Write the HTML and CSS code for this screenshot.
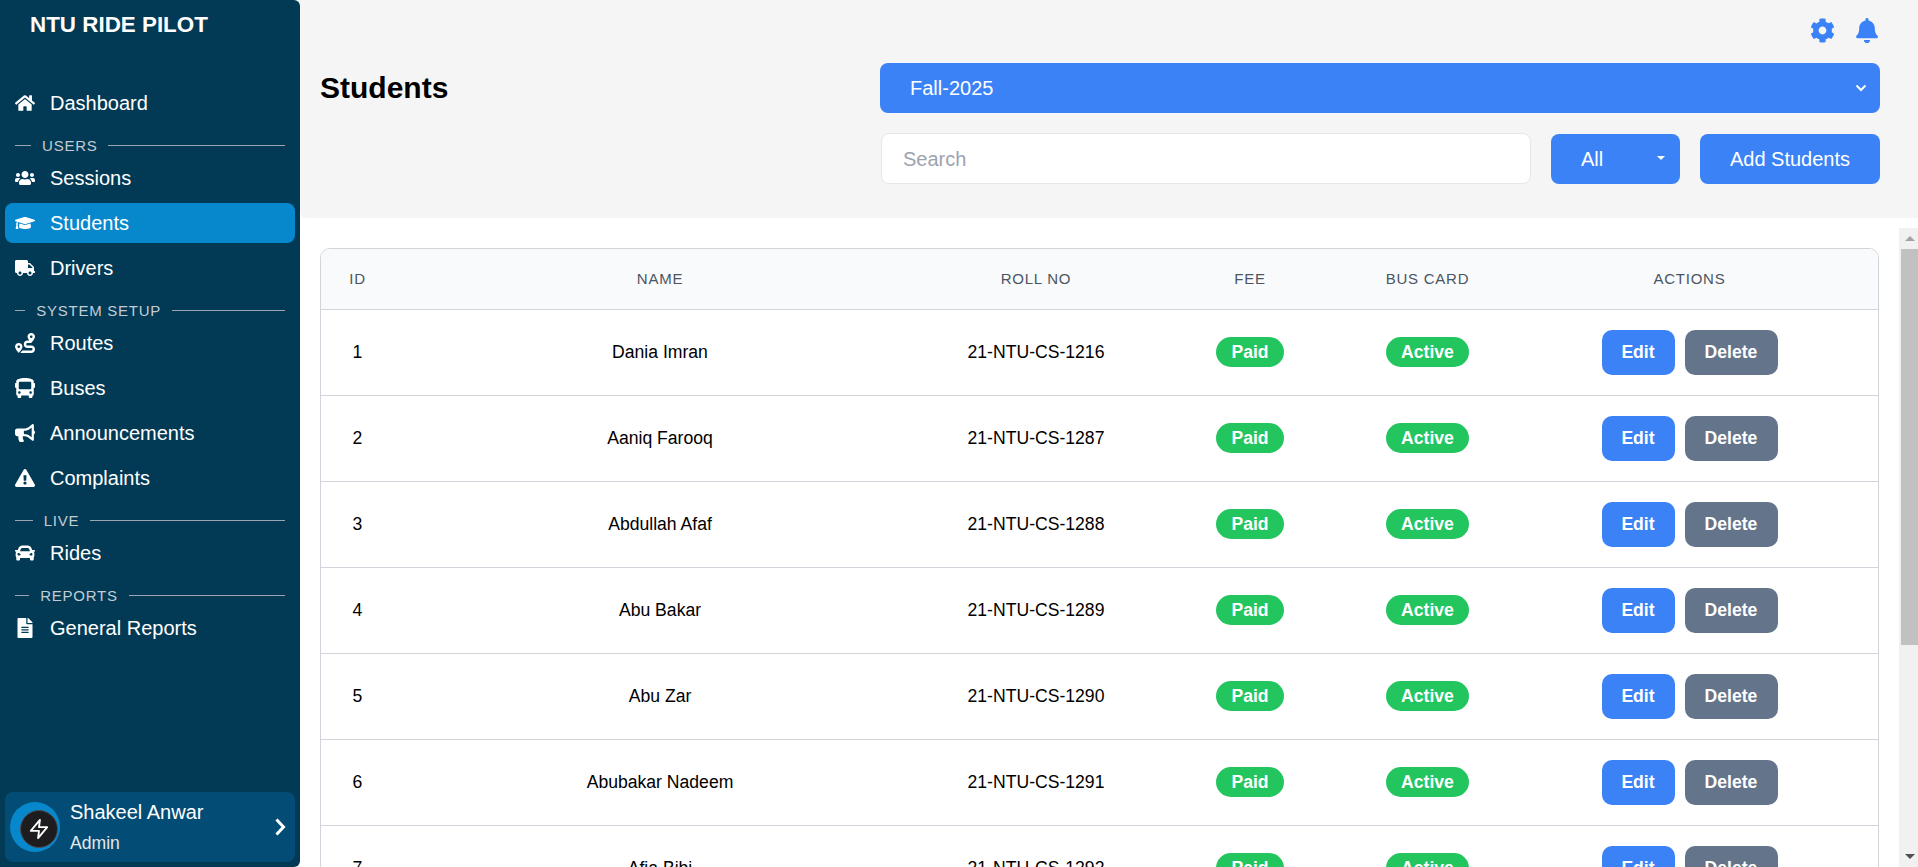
FILE: index.html
```html
<!DOCTYPE html>
<html lang="en">
<head>
    <meta charset="UTF-8">
    <meta name="viewport" content="width=device-width, initial-scale=1.0">
    <title>Students - NTU Ride Pilot</title>
    <link rel="stylesheet" href="styles.css">
</head>
<body>
    <div class="layout">
        <aside class="sidebar">
            <div class="brand">NTU RIDE PILOT</div>

            <nav class="nav">
                <a class="nav-item" href="#">
                    <svg class="nav-icon" viewBox="0 0 576 512"><path d="M280.37 148.26L96 300.11V464a16 16 0 0 0 16 16l112.06-.29a16 16 0 0 0 15.92-16V368a16 16 0 0 1 16-16h64a16 16 0 0 1 16 16v95.64a16 16 0 0 0 16 16.05L464 480a16 16 0 0 0 16-16V300L295.67 148.26a12.19 12.19 0 0 0-15.3 0zM571.6 251.47L488 182.56V44.05a12 12 0 0 0-12-12h-56a12 12 0 0 0-12 12v72.61L318.47 43a48 48 0 0 0-61 0L4.34 251.47a12 12 0 0 0-1.6 16.9l25.5 31A12 12 0 0 0 45.15 301l235.22-193.74a12.19 12.19 0 0 1 15.3 0L530.9 301a12 12 0 0 0 16.9-1.6l25.5-31a12 12 0 0 0-1.7-16.93z"/></svg>
                    Dashboard
                </a>

                <div class="nav-label"><span>USERS</span></div>
                <a class="nav-item" href="#">
                    <svg class="nav-icon" viewBox="0 0 640 512"><path d="M96 224c35.3 0 64-28.7 64-64s-28.7-64-64-64-64 28.7-64 64 28.7 64 64 64zm448 0c35.3 0 64-28.7 64-64s-28.7-64-64-64-64 28.7-64 64 28.7 64 64 64zm32 32h-64c-17.6 0-33.5 7.1-45.1 18.6 40.3 22.1 68.9 62 75.1 109.4h66c17.7 0 32-14.3 32-32v-32c0-35.3-28.7-64-64-64zm-256 0c61.9 0 112-50.1 112-112S381.9 32 320 32 208 82.1 208 144s50.1 112 112 112zm76.8 32h-8.3c-20.8 10-43.9 16-68.5 16s-47.6-6-68.5-16h-8.3C179.6 288 128 339.6 128 403.2V432c0 26.5 21.5 48 48 48h288c26.5 0 48-21.5 48-48v-28.8c0-63.6-51.6-115.2-115.2-115.2zm-223.7-13.4C161.5 263.1 145.6 256 128 256H64c-35.3 0-64 28.7-64 64v32c0 17.7 14.3 32 32 32h65.9c6.3-47.4 34.9-87.3 75.2-109.4z"/></svg>
                    Sessions
                </a>
                <a class="nav-item active" href="#">
                    <svg class="nav-icon" viewBox="0 0 640 512"><path d="M622.34 153.2L343.4 67.5c-15.2-4.67-31.6-4.67-46.79 0L17.66 153.2c-23.54 7.23-23.54 38.36 0 45.59l48.63 14.94c-10.67 13.19-17.23 29.28-17.88 46.9C38.78 266.15 32 276.11 32 288c0 10.78 5.68 19.85 13.86 25.65L20.33 428.53C18.11 438.52 25.71 448 35.94 448h56.11c10.24 0 17.84-9.48 15.62-19.47L82.14 313.65C90.32 307.85 96 298.78 96 288c0-11.57-6.47-21.25-15.66-26.87.76-15.02 8.44-28.3 20.69-36.72L296.6 284.5c9.06 2.78 26.44 6.25 46.79 0l278.95-85.7c23.55-7.24 23.55-38.36 0-45.6zM352.79 315.09c-28.53 8.76-52.84 3.92-65.59 0l-145.02-44.55L128 384c0 35.35 85.96 64 192 64s192-28.65 192-64l-14.18-113.47-145.03 44.56z"/></svg>
                    Students
                </a>
                <a class="nav-item" href="#">
                    <svg class="nav-icon" viewBox="0 0 640 512"><path d="M624 352h-16V243.9c0-12.7-5.1-24.9-14.1-33.9L494 110.1c-9-9-21.2-14.1-33.9-14.1H416V48c0-26.5-21.5-48-48-48H48C21.5 0 0 21.5 0 48v320c0 26.5 21.5 48 48 48h16c0 53 43 96 96 96s96-43 96-96h128c0 53 43 96 96 96s96-43 96-96h48c8.8 0 16-7.2 16-16v-32c0-8.8-7.2-16-16-16zM160 464c-26.5 0-48-21.5-48-48s21.5-48 48-48 48 21.5 48 48-21.5 48-48 48zm320 0c-26.5 0-48-21.5-48-48s21.5-48 48-48 48 21.5 48 48-21.5 48-48 48zm80-208H416V144h44.1l99.9 99.9V256z"/></svg>
                    Drivers
                </a>

                <div class="nav-label"><span>SYSTEM SETUP</span></div>
                <a class="nav-item" href="#">
                    <svg class="nav-icon" viewBox="0 0 512 512"><path d="M416 320h-96c-17.6 0-32-14.4-32-32s14.4-32 32-32h96s96-107 96-160-43-96-96-96-96 43-96 96c0 25.5 22.2 63.4 45.3 96H320c-52.9 0-96 43.1-96 96s43.1 96 96 96h96c17.6 0 32 14.4 32 32s-14.4 32-32 32H185.5c-16 24.8-33.8 47.7-47.3 64H416c52.9 0 96-43.1 96-96s-43.1-96-96-96zm0-256c17.7 0 32 14.3 32 32s-14.3 32-32 32-32-14.3-32-32 14.3-32 32-32zM96 256c-53 0-96 43-96 96s96 160 96 160 96-107 96-160-43-96-96-96zm0 128c-17.7 0-32-14.3-32-32s14.3-32 32-32 32 14.3 32 32-14.3 32-32 32z"/></svg>
                    Routes
                </a>
                <a class="nav-item" href="#">
                    <svg class="nav-icon" viewBox="0 0 512 512"><path d="M488 128h-8V80c0-44.8-99.2-80-224-80S32 35.2 32 80v48h-8c-13.25 0-24 10.74-24 24v80c0 13.25 10.75 24 24 24h8v160c0 17.67 14.33 32 32 32v32c0 17.67 14.33 32 32 32h32c17.67 0 32-14.33 32-32v-32h192v32c0 17.67 14.33 32 32 32h32c17.67 0 32-14.33 32-32v-32h6.4c16 0 25.6-12.8 25.6-25.6V256h8c13.25 0 24-10.75 24-24v-80c0-13.26-10.75-24-24-24zM112 400c-17.67 0-32-14.33-32-32s14.33-32 32-32 32 14.33 32 32-14.33 32-32 32zm16-112c-17.67 0-32-14.33-32-32V128c0-17.67 14.33-32 32-32h256c17.67 0 32 14.33 32 32v128c0 17.67-14.33 32-32 32H128zm272 112c-17.67 0-32-14.33-32-32s14.33-32 32-32 32 14.33 32 32-14.33 32-32 32z"/></svg>
                    Buses
                </a>
                <a class="nav-item" href="#">
                    <svg class="nav-icon" viewBox="0 0 576 512"><path d="M576 240c0-23.63-12.95-44.04-32-55.12V32.01C544 23.26 537.02 0 512 0c-7.12 0-14.19 2.38-19.98 7.02l-85.03 68.03C364.28 109.19 310.66 128 256 128H64c-35.35 0-64 28.65-64 64v96c0 35.35 28.65 64 64 64h33.7c-1.39 10.48-2.18 21.14-2.18 32 0 39.77 9.26 77.35 25.56 110.94 5.19 10.69 16.52 17.06 28.4 17.06h74.28c26.05 0 41.69-29.84 25.9-50.56-16.4-21.52-26.15-48.36-26.15-77.44 0-11.11 1.62-21.79 4.41-32H256c54.66 0 108.28 18.81 150.98 52.95l85.03 68.03a32.023 32.023 0 0 0 19.98 7.02c24.92 0 32-22.78 32-32V295.13C563.05 284.04 576 263.63 576 240zm-96 141.42l-33.05-26.44C392.95 311.78 325.12 288 256 288v-96c69.12 0 136.95-23.78 190.95-66.98L480 98.58v282.84z"/></svg>
                    Announcements
                </a>
                <a class="nav-item" href="#">
                    <svg class="nav-icon" viewBox="0 0 576 512"><path d="M569.517 440.013C587.975 472.007 564.806 512 527.94 512H48.054c-36.937 0-59.999-40.055-41.577-71.987L246.423 24.035c18.467-32.009 64.72-31.951 83.154 0l239.94 416.028zM288 354c-25.405 0-46 20.595-46 46s20.595 46 46 46 46-20.595 46-46-20.595-46-46-46zm-43.673-165.346l7.418 136c.347 6.364 5.609 11.346 11.982 11.346h48.546c6.373 0 11.635-4.982 11.982-11.346l7.418-136c.375-6.874-5.098-12.654-11.982-12.654h-63.383c-6.884 0-12.356 5.78-11.981 12.654z"/></svg>
                    Complaints
                </a>

                <div class="nav-label"><span>LIVE</span></div>
                <a class="nav-item" href="#">
                    <svg class="nav-icon" viewBox="0 0 512 512"><path d="M499.99 176h-59.87l-16.64-41.6C406.38 91.63 365.57 64 319.5 64h-127c-46.06 0-86.88 27.63-103.99 70.4L71.87 176H12.01C4.2 176-1.53 183.34.37 190.91l6 24C7.7 220.25 12.5 224 18.01 224h20.07C24.65 235.73 16 252.78 16 272v48c0 16.12 6.16 30.67 16 41.93V416c0 17.67 14.33 32 32 32h32c17.67 0 32-14.33 32-32v-32h256v32c0 17.67 14.33 32 32 32h32c17.67 0 32-14.33 32-32v-54.07c9.84-11.25 16-25.8 16-41.93v-48c0-19.22-8.65-36.27-22.07-48H494c5.51 0 10.31-3.75 11.64-9.09l6-24c1.89-7.57-3.84-14.91-11.65-14.91zm-352.06-17.83c7.29-18.22 24.94-30.17 44.57-30.17h127c19.63 0 37.28 11.95 44.57 30.17L384 208H128l19.93-49.83zM96 319.8c-19.2 0-32-12.76-32-31.9S76.8 256 96 256s48 28.71 48 47.85-28.8 15.95-48 15.95zm320 0c-19.2 0-48 3.19-48-15.95S396.8 256 416 256s32 12.76 32 31.9-12.8 31.9-32 31.9z"/></svg>
                    Rides
                </a>

                <div class="nav-label"><span>REPORTS</span></div>
                <a class="nav-item" href="#">
                    <svg class="nav-icon" viewBox="0 0 384 512"><path d="M224 136V0H24C10.7 0 0 10.7 0 24v464c0 13.3 10.7 24 24 24h336c13.3 0 24-10.7 24-24V160H248c-13.2 0-24-10.8-24-24zm64 236c0 6.6-5.4 12-12 12H108c-6.6 0-12-5.4-12-12v-8c0-6.6 5.4-12 12-12h168c6.6 0 12 5.4 12 12v8zm0-64c0 6.6-5.4 12-12 12H108c-6.6 0-12-5.4-12-12v-8c0-6.6 5.4-12 12-12h168c6.6 0 12 5.4 12 12v8zm0-72v8c0 6.6-5.4 12-12 12H108c-6.6 0-12-5.4-12-12v-8c0-6.6 5.4-12 12-12h168c6.6 0 12 5.4 12 12zm96-114.1v6.1H256V0h6.1c6.4 0 12.5 2.5 17 7l97.9 98c4.5 4.5 7 10.6 7 16.9z"/></svg>
                    General Reports
                </a>
            </nav>

            <div class="user-box">
                <div class="avatar">
                    <div class="avatar-inner">
                        <svg viewBox="0 0 24 24"><path d="M13 2 3 14h9l-1 8 10-12h-9l1-8z"/></svg>
                    </div>
                </div>
                <div class="user-info">
                    <div class="user-name">Shakeel Anwar</div>
                    <div class="user-role">Admin</div>
                </div>
                <svg class="user-arrow" viewBox="0 0 12 20"><path d="M2.5 2.5 9.5 10l-7 7.5"/></svg>
            </div>
        </aside>

        <main class="main">
            <header class="topbar">
                <div class="top-icons">
                    <svg class="top-icon" viewBox="0 0 512 512"><path d="M487.4 315.7l-42.6-24.6c4.3-23.2 4.3-47 0-70.2l42.6-24.6c4.9-2.8 7.1-8.6 5.5-14-11.1-35.6-30-67.8-54.7-94.6-3.8-4.1-10-5.1-14.8-2.3L380.8 110c-17.9-15.4-38.5-27.3-60.8-35.1V25.8c0-5.6-3.9-10.5-9.4-11.7-36.7-8.2-74.3-7.8-109.2 0-5.5 1.2-9.4 6.1-9.4 11.7V75c-22.2 7.9-42.8 19.8-60.8 35.1L88.7 85.5c-4.9-2.8-11-1.9-14.8 2.3-24.7 26.7-43.6 58.9-54.7 94.6-1.7 5.4.6 11.2 5.5 14L67.3 221c-4.3 23.2-4.3 47 0 70.2l-42.6 24.6c-4.9 2.8-7.1 8.6-5.5 14 11.1 35.6 30 67.8 54.7 94.6 3.8 4.1 10 5.1 14.8 2.3l42.6-24.6c17.9 15.4 38.5 27.3 60.8 35.1v49.2c0 5.6 3.9 10.5 9.4 11.7 36.7 8.2 74.3 7.8 109.2 0 5.5-1.2 9.4-6.1 9.4-11.7v-49.2c22.2-7.9 42.8-19.8 60.8-35.1l42.6 24.6c4.9 2.8 11 1.9 14.8-2.3 24.7-26.7 43.6-58.9 54.7-94.6 1.5-5.5-.7-11.3-5.6-14.1zM256 336c-44.1 0-80-35.9-80-80s35.9-80 80-80 80 35.9 80 80-35.9 80-80 80z"/></svg>
                    <svg class="top-icon bell" viewBox="0 0 448 512"><path d="M224 512c35.32 0 63.97-28.65 63.97-64H160.03c0 35.35 28.65 64 63.97 64zm215.39-149.71c-19.32-20.76-55.47-51.99-55.47-154.29 0-77.7-54.48-139.9-127.94-155.16V32c0-17.67-14.32-32-31.98-32s-31.98 14.33-31.98 32v20.84C118.56 68.1 64.08 130.3 64.08 208c0 102.3-36.15 133.53-55.47 154.29-6 6.45-8.66 14.16-8.61 21.71.11 16.4 12.98 32 32.1 32h383.8c19.12 0 32-15.6 32.1-32 .05-7.55-2.61-15.27-8.61-21.71z"/></svg>
                </div>

                <div class="title-row">
                    <h1>Students</h1>
                    <div class="controls">
                        <div class="select-wrap">
                            <select class="session-select">
                                <option>Fall-2025</option>
                            </select>
                            <svg class="select-chevron" viewBox="0 0 12 8"><path d="M1.5 1.5 6 6l4.5-4.5"/></svg>
                        </div>
                        <div class="filter-row">
                            <input class="search" type="text" placeholder="Search">
                            <div class="select-wrap filter-wrap">
                                <select class="filter-select">
                                    <option>All</option>
                                </select>
                                <span class="select-caret"></span>
                            </div>
                            <button class="add-btn">Add Students</button>
                        </div>
                    </div>
                </div>
            </header>

            <section class="content">
                <div class="table-area">
                    <div class="table-card">
                        <table>
                            <colgroup>
                                <col class="col-id">
                                <col class="col-name">
                                <col class="col-roll">
                                <col class="col-fee">
                                <col class="col-card">
                                <col>
                            </colgroup>
                            <thead>
                                <tr>
                                    <th>ID</th>
                                    <th>Name</th>
                                    <th>Roll No</th>
                                    <th>Fee</th>
                                    <th>Bus Card</th>
                                    <th>Actions</th>
                                </tr>
                            </thead>
                            <tbody>
                                <tr>
                                    <td>1</td><td>Dania Imran</td><td>21-NTU-CS-1216</td>
                                    <td><span class="badge">Paid</span></td><td><span class="badge">Active</span></td>
                                    <td><button class="btn edit">Edit</button><button class="btn delete">Delete</button></td>
                                </tr>
                                <tr>
                                    <td>2</td><td>Aaniq Farooq</td><td>21-NTU-CS-1287</td>
                                    <td><span class="badge">Paid</span></td><td><span class="badge">Active</span></td>
                                    <td><button class="btn edit">Edit</button><button class="btn delete">Delete</button></td>
                                </tr>
                                <tr>
                                    <td>3</td><td>Abdullah Afaf</td><td>21-NTU-CS-1288</td>
                                    <td><span class="badge">Paid</span></td><td><span class="badge">Active</span></td>
                                    <td><button class="btn edit">Edit</button><button class="btn delete">Delete</button></td>
                                </tr>
                                <tr>
                                    <td>4</td><td>Abu Bakar</td><td>21-NTU-CS-1289</td>
                                    <td><span class="badge">Paid</span></td><td><span class="badge">Active</span></td>
                                    <td><button class="btn edit">Edit</button><button class="btn delete">Delete</button></td>
                                </tr>
                                <tr>
                                    <td>5</td><td>Abu Zar</td><td>21-NTU-CS-1290</td>
                                    <td><span class="badge">Paid</span></td><td><span class="badge">Active</span></td>
                                    <td><button class="btn edit">Edit</button><button class="btn delete">Delete</button></td>
                                </tr>
                                <tr>
                                    <td>6</td><td>Abubakar Nadeem</td><td>21-NTU-CS-1291</td>
                                    <td><span class="badge">Paid</span></td><td><span class="badge">Active</span></td>
                                    <td><button class="btn edit">Edit</button><button class="btn delete">Delete</button></td>
                                </tr>
                                <tr>
                                    <td>7</td><td>Afia Bibi</td><td>21-NTU-CS-1292</td>
                                    <td><span class="badge">Paid</span></td><td><span class="badge">Active</span></td>
                                    <td><button class="btn edit">Edit</button><button class="btn delete">Delete</button></td>
                                </tr>
                            </tbody>
                        </table>
                    </div>
                </div>

                <div class="scrollbar">
                    <div class="scroll-btn"><span class="arrow-up"></span></div>
                    <div class="scroll-thumb"></div>
                    <div class="scroll-rest"></div>
                    <div class="scroll-btn"><span class="arrow-down"></span></div>
                </div>
            </section>
        </main>
    </div>
</body>
</html>
```

FILE: styles.css
```css
* {
    box-sizing: border-box;
}

html, body {
    margin: 0;
    height: 100%;
    overflow: hidden;
}

body {
    font-family: "Liberation Sans", Arial, sans-serif;
    background: white;
    color: black;
}

.layout {
    display: flex;
    height: 100vh;
}

/* sidebar */
.sidebar {
    width: 300px;
    flex-shrink: 0;
    display: flex;
    flex-direction: column;
    background: #023a56;
    border-radius: 0 6px 6px 0;
    color: white;
}

.brand {
    height: 83px;
    padding: 11px 0 0 30px;
    font-size: 22.4px;
    line-height: 28px;
    font-weight: bold;
}

.nav {
    display: flex;
    flex-direction: column;
    gap: 5px;
    flex: 1;
    padding: 0 5px;
}

.nav-item {
    display: flex;
    align-items: center;
    gap: 15px;
    height: 40px;
    padding: 0 10px;
    border-radius: 8px;
    font-size: 20px;
    color: white;
    text-decoration: none;
}

.nav-item.active {
    background: #0788cd;
}

.nav-icon {
    width: 20px;
    height: 20px;
    flex-shrink: 0;
    fill: white;
}

.nav-label {
    display: flex;
    align-items: center;
    gap: 11px;
    height: 25px;
    padding: 10px 10px 0;
    font-size: 15px;
    line-height: 16px;
    letter-spacing: 0.05em;
    color: #c3ccd4;
}

.nav-label::before,
.nav-label::after {
    content: "";
    height: 1px;
    background: #9aa7b2;
}

.nav-label::before {
    flex: 1;
}

.nav-label::after {
    flex: 11;
}

.user-box {
    display: flex;
    align-items: center;
    height: 70px;
    margin: 0 5px 5px;
    padding: 0 5px;
    border-radius: 8px;
    background: #034c75;
}

.avatar {
    width: 50px;
    height: 50px;
    flex-shrink: 0;
    border-radius: 50%;
    background: #0788cd;
    display: flex;
    padding: 8px 0 0 10px;
}

.avatar-inner {
    width: 38px;
    height: 38px;
    border: 1px solid #4a4a4d;
    border-radius: 50%;
    background: #1d1d20;
    display: flex;
    align-items: center;
    justify-content: center;
}

.avatar-inner svg {
    width: 22px;
    height: 22px;
    fill: none;
    stroke: white;
    stroke-width: 2;
    stroke-linejoin: round;
}

.user-info {
    flex: 1;
    padding-left: 10px;
}

.user-name {
    font-size: 20px;
    line-height: 27px;
}

.user-role {
    font-size: 17.6px;
    line-height: 24px;
    margin-top: 5px;
    color: #e5e7eb;
}

.user-arrow {
    width: 12px;
    height: 20px;
    margin-right: 4px;
    fill: none;
    stroke: white;
    stroke-width: 3;
}

/* main area */
.main {
    flex: 1;
    min-width: 0;
    display: flex;
    flex-direction: column;
}

.topbar {
    height: 218px;
    flex-shrink: 0;
    padding: 18px 38px 0 20px;
    background: #f5f5f5;
    border-radius: 0 0 0 6px;
}

.top-icons {
    display: flex;
    justify-content: flex-end;
    gap: 21px;
    height: 45px;
    padding-right: 2px;
}

.top-icon {
    height: 25px;
    width: 25px;
    fill: #3b82f6;
}

.top-icon.bell {
    width: 22px;
}

.title-row {
    display: flex;
    justify-content: space-between;
}

h1 {
    margin: 0;
    font-size: 30px;
    line-height: 50px;
}

.controls {
    width: 1000px;
    display: flex;
    flex-direction: column;
    gap: 20px;
}

.select-wrap {
    position: relative;
}

.session-select,
.filter-select {
    appearance: none;
    width: 100%;
    border: none;
    border-radius: 8px;
    background: #3b82f6;
    color: white;
    font-family: inherit;
    font-size: 20px;
}

.session-select {
    display: block;
    height: 50px;
    padding: 0 30px;
}

.select-chevron {
    position: absolute;
    right: 13px;
    top: 21px;
    width: 12px;
    height: 8px;
    fill: none;
    stroke: white;
    stroke-width: 2;
    pointer-events: none;
}

.filter-row {
    display: flex;
    gap: 20px;
    padding-left: 1px;
}

.search {
    flex: 1;
    min-width: 0;
    height: 51px;
    padding: 2px 21px 0;
    border: 1px solid #e5e7eb;
    border-radius: 8px;
    background: white;
    font-family: inherit;
    font-size: 20px;
}

.search::placeholder {
    color: #9ca3af;
}

.filter-wrap {
    width: 129px;
    margin-top: 1px;
}

.filter-select {
    display: block;
    height: 50px;
    padding: 0 30px;
}

.select-caret {
    position: absolute;
    right: 15px;
    top: 22px;
    border-left: 4px solid transparent;
    border-right: 4px solid transparent;
    border-top: 4px solid white;
    pointer-events: none;
}

.add-btn {
    width: 180px;
    height: 50px;
    margin-top: 1px;
    border: none;
    border-radius: 8px;
    background: #3b82f6;
    color: white;
    font-family: inherit;
    font-size: 20px;
}

/* table */
.content {
    flex: 1;
    min-height: 0;
    margin-top: 10px;
    display: flex;
}

.table-area {
    flex: 1;
    min-width: 0;
    padding: 20px 20px 0;
    overflow: hidden;
}

.scrollbar {
    width: 19px;
    flex-shrink: 0;
    display: flex;
    flex-direction: column;
    background: #f1f1f1;
}

.scroll-btn {
    height: 21px;
    display: flex;
    align-items: center;
    justify-content: center;
    padding-left: 2px;
}

.scroll-thumb {
    height: 396px;
    margin-left: 2px;
    background: #c1c1c1;
}

.scroll-rest {
    flex: 1;
}

.arrow-up {
    border-left: 5px solid transparent;
    border-right: 5px solid transparent;
    border-bottom: 5px solid #a3a3a3;
}

.arrow-down {
    border-left: 5px solid transparent;
    border-right: 5px solid transparent;
    border-top: 5px solid #505050;
}

.table-card {
    border: 1px solid #d1d5db;
    border-radius: 10px;
    overflow: hidden;
}

table {
    width: 100%;
    border-collapse: collapse;
    table-layout: fixed;
}

.col-id { width: 73px; }
.col-name { width: 532px; }
.col-roll { width: 220px; }
.col-fee { width: 208px; }
.col-card { width: 147px; }

th {
    height: 60px;
    padding: 0;
    background: #f9fafb;
    border-bottom: 1px solid #d1d5db;
    font-size: 15px;
    font-weight: normal;
    text-transform: uppercase;
    letter-spacing: 0.05em;
    color: #4b5563;
}

td {
    height: 86px;
    padding: 0;
    border-bottom: 1px solid #d1d5db;
    font-size: 17.6px;
    text-align: center;
}

.badge {
    display: inline-block;
    padding: 0 15px;
    border-radius: 15px;
    background: #22c55e;
    color: white;
    font-size: 17.6px;
    font-weight: bold;
    line-height: 30px;
}

.btn {
    height: 45px;
    padding: 0;
    border: none;
    border-radius: 10px;
    color: white;
    font-family: inherit;
    font-size: 17.6px;
    font-weight: bold;
}

.btn.edit {
    width: 73px;
    margin-right: 10px;
    background: #3b82f6;
}

.btn.delete {
    width: 93px;
    background: #64748b;
}
```
